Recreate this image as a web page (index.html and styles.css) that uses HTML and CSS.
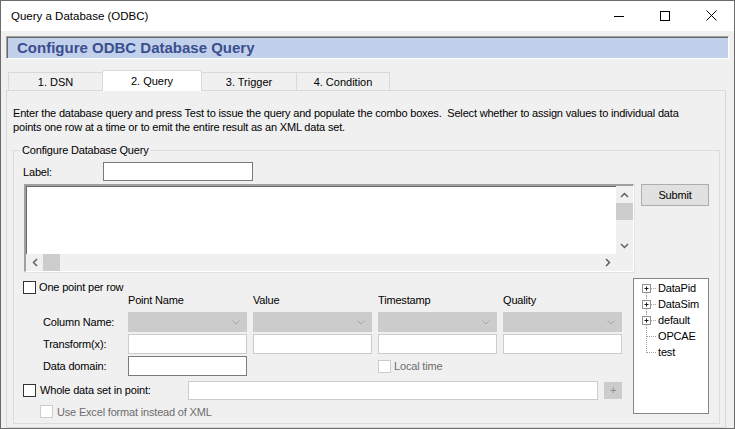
FILE: index.html
```html
<!DOCTYPE html>
<html>

<head>
    <title>Query a Database (ODBC)</title>
    <meta name="viewport" content="width=device-width, initial-scale=1.0">
    <link rel="stylesheet" href="styles.css">
</head>

<body>
    <div class="window">
        <div class="titlebar">
            <span class="title">Query a Database (ODBC)</span>
            <div class="caption-buttons">
                <span class="caption-btn">
                    <svg width="10" height="10" viewBox="0 0 10 10"><line x1="0" y1="5.5" x2="10" y2="5.5" stroke="#000" stroke-width="1"/></svg>
                </span>
                <span class="caption-btn">
                    <svg width="10" height="10" viewBox="0 0 10 10"><rect x="0.5" y="0.5" width="9" height="9" fill="none" stroke="#000" stroke-width="1"/></svg>
                </span>
                <span class="caption-btn">
                    <svg width="11" height="11" viewBox="0 0 11 11"><path d="M0.5 0.5 L10.5 10.5 M10.5 0.5 L0.5 10.5" stroke="#000" stroke-width="1"/></svg>
                </span>
            </div>
        </div>

        <div class="client">
            <div class="banner">Configure ODBC Database Query</div>

            <!-- Wizard steps -->
            <div class="tabs">
                <div class="tab">1. DSN</div>
                <div class="tab selected">2. Query</div>
                <div class="tab">3. Trigger</div>
                <div class="tab">4. Condition</div>
            </div>

            <div class="tab-page">
                <p class="intro">Enter the database query and press Test to issue the query and populate the combo boxes.&nbsp; Select whether to assign values to individual data<br>points one row at a time or to emit the entire result as an XML data set.</p>

                <fieldset class="group">
                    <legend>Configure Database Query</legend>

                    <div class="label-row">
                        <span class="label-text">Label:</span>
                        <div class="textbox label-box"></div>
                    </div>

                    <div class="query-row">
                        <div class="query-box">
                            <div class="query-text"></div>
                            <div class="vscroll">
                                <span class="sb-btn">
                                    <svg width="9" height="6" viewBox="0 0 9 6"><polyline points="1,5 4.5,1.5 8,5" fill="none" stroke="#606060" stroke-width="1.5"/></svg>
                                </span>
                                <span class="sb-thumb"></span>
                                <span class="sb-track"></span>
                                <span class="sb-btn">
                                    <svg width="9" height="6" viewBox="0 0 9 6"><polyline points="1,1 4.5,4.5 8,1" fill="none" stroke="#606060" stroke-width="1.5"/></svg>
                                </span>
                            </div>
                            <div class="hscroll">
                                <span class="sb-btn">
                                    <svg width="6" height="9" viewBox="0 0 6 9"><polyline points="5,1 1.5,4.5 5,8" fill="none" stroke="#606060" stroke-width="1.5"/></svg>
                                </span>
                                <span class="sb-thumb"></span>
                                <span class="sb-track"></span>
                                <span class="sb-btn">
                                    <svg width="6" height="9" viewBox="0 0 6 9"><polyline points="1,1 4.5,4.5 1,8" fill="none" stroke="#606060" stroke-width="1.5"/></svg>
                                </span>
                            </div>
                            <div class="sb-corner"></div>
                        </div>
                        <button type="button" class="submit-btn">Submit</button>
                    </div>

                    <div class="lower">
                        <div class="lower-left">
                            <div class="check-row">
                                <span class="check"></span>
                                <span class="check-label">One point per row</span>
                            </div>

                            <div class="point-grid">
                                <span></span>
                                <span class="col-head">Point Name</span>
                                <span class="col-head">Value</span>
                                <span class="col-head">Timestamp</span>
                                <span class="col-head">Quality</span>

                                <span class="row-label">Column Name:</span>
                                <div class="combo"><svg width="8" height="5" viewBox="0 0 8 5"><polyline points="0.5,0.5 4,4 7.5,0.5" fill="none" stroke="#a6a6a6" stroke-width="1"/></svg></div>
                                <div class="combo"><svg width="8" height="5" viewBox="0 0 8 5"><polyline points="0.5,0.5 4,4 7.5,0.5" fill="none" stroke="#a6a6a6" stroke-width="1"/></svg></div>
                                <div class="combo"><svg width="8" height="5" viewBox="0 0 8 5"><polyline points="0.5,0.5 4,4 7.5,0.5" fill="none" stroke="#a6a6a6" stroke-width="1"/></svg></div>
                                <div class="combo"><svg width="8" height="5" viewBox="0 0 8 5"><polyline points="0.5,0.5 4,4 7.5,0.5" fill="none" stroke="#a6a6a6" stroke-width="1"/></svg></div>

                                <span class="row-label">Transform(x):</span>
                                <div class="textbox light"></div>
                                <div class="textbox light"></div>
                                <div class="textbox light"></div>
                                <div class="textbox light"></div>

                                <span class="row-label">Data domain:</span>
                                <div class="textbox"></div>
                                <span></span>
                                <div class="check-row inline">
                                    <span class="check disabled"></span>
                                    <span class="check-label disabled-text">Local time</span>
                                </div>
                            </div>

                            <div class="whole-row">
                                <span class="check"></span>
                                <span class="whole-label">Whole data set in point:</span>
                                <div class="textbox light whole-box"></div>
                                <span class="plus-btn">+</span>
                            </div>

                            <div class="check-row excel-row">
                                <span class="check disabled"></span>
                                <span class="check-label disabled-text">Use Excel format instead of XML</span>
                            </div>
                        </div>

                        <div class="tree">
                            <div class="tree-node">
                                <svg width="24" height="16" viewBox="0 0 24 16">
                                    <line x1="12.5" y1="13" x2="12.5" y2="16" stroke="#a0a0a0" stroke-dasharray="1 1"/>
                                    <line x1="17" y1="8.5" x2="23" y2="8.5" stroke="#a0a0a0" stroke-dasharray="1 1"/>
                                    <rect x="8.5" y="4.5" width="8" height="8" fill="#fff" stroke="#919191"/>
                                    <path d="M10.5 8.5 H14.5 M12.5 6.5 V10.5" stroke="#1c1c1c"/>
                                </svg>
                                <span>DataPid</span>
                            </div>
                            <div class="tree-node">
                                <svg width="24" height="16" viewBox="0 0 24 16">
                                    <line x1="12.5" y1="0" x2="12.5" y2="4" stroke="#a0a0a0" stroke-dasharray="1 1"/>
                                    <line x1="12.5" y1="13" x2="12.5" y2="16" stroke="#a0a0a0" stroke-dasharray="1 1"/>
                                    <line x1="17" y1="8.5" x2="23" y2="8.5" stroke="#a0a0a0" stroke-dasharray="1 1"/>
                                    <rect x="8.5" y="4.5" width="8" height="8" fill="#fff" stroke="#919191"/>
                                    <path d="M10.5 8.5 H14.5 M12.5 6.5 V10.5" stroke="#1c1c1c"/>
                                </svg>
                                <span>DataSim</span>
                            </div>
                            <div class="tree-node">
                                <svg width="24" height="16" viewBox="0 0 24 16">
                                    <line x1="12.5" y1="0" x2="12.5" y2="4" stroke="#a0a0a0" stroke-dasharray="1 1"/>
                                    <line x1="12.5" y1="13" x2="12.5" y2="16" stroke="#a0a0a0" stroke-dasharray="1 1"/>
                                    <line x1="17" y1="8.5" x2="23" y2="8.5" stroke="#a0a0a0" stroke-dasharray="1 1"/>
                                    <rect x="8.5" y="4.5" width="8" height="8" fill="#fff" stroke="#919191"/>
                                    <path d="M10.5 8.5 H14.5 M12.5 6.5 V10.5" stroke="#1c1c1c"/>
                                </svg>
                                <span>default</span>
                            </div>
                            <div class="tree-node">
                                <svg width="24" height="16" viewBox="0 0 24 16">
                                    <line x1="12.5" y1="0" x2="12.5" y2="16" stroke="#a0a0a0" stroke-dasharray="1 1"/>
                                    <line x1="13" y1="8.5" x2="23" y2="8.5" stroke="#a0a0a0" stroke-dasharray="1 1"/>
                                </svg>
                                <span>OPCAE</span>
                            </div>
                            <div class="tree-node">
                                <svg width="24" height="16" viewBox="0 0 24 16">
                                    <line x1="12.5" y1="0" x2="12.5" y2="9" stroke="#a0a0a0" stroke-dasharray="1 1"/>
                                    <line x1="13" y1="8.5" x2="23" y2="8.5" stroke="#a0a0a0" stroke-dasharray="1 1"/>
                                </svg>
                                <span>test</span>
                            </div>
                        </div>
                    </div>
                </fieldset>
            </div>
        </div>
    </div>
</body>
</html>
```

FILE: styles.css
```css
* {
    box-sizing: border-box;
}

body {
    margin: 0;
    font-family: "Liberation Sans", Arial, sans-serif;
    font-size: 11px;
    color: #000000;
}

.window {
    width: 735px;
    height: 429px;
    border: 1px solid #6b6b6b;
    background-color: #f0f0f0;
    display: flex;
    flex-direction: column;
    overflow: hidden;
}

/* Title bar */
.titlebar {
    height: 30px;
    flex-shrink: 0;
    background-color: #ffffff;
    display: flex;
    align-items: center;
}

.title {
    padding-left: 10px;
    font-size: 11.5px;
    padding-bottom: 1px;
}

.caption-buttons {
    margin-left: auto;
    display: flex;
    height: 100%;
}

.caption-btn {
    width: 46px;
    display: flex;
    align-items: center;
    justify-content: center;
    padding-bottom: 1px;
}

.client {
    flex: 1;
    display: flex;
    flex-direction: column;
    padding-top: 5px;
    min-height: 0;
}

.banner {
    margin: 0 5px;
    height: 23px;
    flex-shrink: 0;
    background-color: #c1d0eb;
    border-top: 1px solid #a0a0a0;
    border-left: 1px solid #a0a0a0;
    border-right: 1px solid #ffffff;
    border-bottom: 1px solid #ffffff;
    box-shadow: inset 1px 1px 0 #696969;
    padding-left: 10px;
    font-size: 15px;
    font-weight: bold;
    color: #3b4e8e;
    line-height: 21px;
}

/* Tabs */
.tabs {
    margin: 11px 0 0 5px;
    padding-left: 2px;
    height: 20px;
    flex-shrink: 0;
    display: flex;
    align-items: flex-end;
}

.tab {
    height: 18px;
    border: 1px solid #d9d9d9;
    border-bottom: none;
    background-color: #f0f0f0;
    display: flex;
    align-items: center;
    justify-content: center;
    margin-left: -1px;
}

.tab:nth-child(1) {
    width: 95px;
    margin-left: 0;
}

.tab:nth-child(2) {
    width: 100px;
}

.tab:nth-child(3) {
    width: 96px;
}

.tab:nth-child(4) {
    width: 94px;
}

.tab.selected {
    height: 21px;
    margin-bottom: -1px;
    background-color: #ffffff;
    position: relative;
    z-index: 1;
    padding-bottom: 1px;
}

.tab-page {
    margin-left: 5px;
    width: 720px;
    flex: 1;
    border: 1px solid #d9d9d9;
    padding: 15px 0 0 6px;
    letter-spacing: -0.18px;
}

.intro {
    margin: 0;
    line-height: 14px;
    white-space: nowrap;
}

/* Group box */
.group {
    margin: 10px 0 0 0;
    width: 707px;
    border: 1px solid #dcdcdc;
    padding: 5px 0 5px 9px;
}

.group legend {
    margin-left: -3px;
    padding: 0 2px;
    line-height: 13px;
}

.label-row {
    display: flex;
    align-items: center;
    height: 19px;
}

.label-text {
    width: 80px;
}

.textbox {
    background-color: #ffffff;
    border: 1px solid #7a7a7a;
    height: 20px;
}

.textbox.light {
    border-color: #cccccc;
}

.label-box {
    width: 150px;
    height: 19px;
}

.query-row {
    display: flex;
    align-items: flex-start;
    margin-top: 3px;
}

.query-box {
    margin-left: 1px;
    width: 610px;
    height: 88px;
    border-top: 2px solid #a0a0a0;
    border-left: 2px solid #a0a0a0;
    border-right: 1px solid #ffffff;
    border-bottom: 1px solid #ffffff;
    box-shadow: inset 1px 1px 0 #696969, 1px 1px 0 #e3e3e3;
    display: grid;
    grid-template-columns: 1fr 17px;
    grid-template-rows: 1fr 17px;
    background-color: #ffffff;
}

.vscroll {
    display: grid;
    grid-template-rows: 17px 17px 1fr 17px;
    background-color: #f0f0f0;
}

.hscroll {
    display: grid;
    grid-template-columns: 17px 17px 1fr 17px;
    background-color: #f0f0f0;
}

.sb-btn {
    display: flex;
    align-items: center;
    justify-content: center;
}

.sb-thumb {
    background-color: #cdcdcd;
}

.sb-corner {
    background-color: #f0f0f0;
}

.submit-btn {
    margin-left: 7px;
    width: 68px;
    height: 22px;
    background-color: #e1e1e1;
    border: 1px solid #adadad;
    font-family: "Liberation Sans", Arial, sans-serif;
    font-size: 11px;
    letter-spacing: -0.18px;
    color: #000000;
    padding: 0;
}

/* Point mapping */
.lower {
    display: flex;
    align-items: flex-start;
    margin-top: 6px;
}

.lower-left {
    width: 600px;
    padding-top: 2px;
}

.check-row {
    display: flex;
    align-items: center;
    height: 14px;
}

.check-row.inline {
    height: 20px;
}

.check {
    width: 13px;
    height: 13px;
    border: 1px solid #333333;
    background-color: #ffffff;
    flex-shrink: 0;
}

.check.disabled {
    border-color: #cccccc;
}

.check-label {
    margin-left: 3px;
}

.disabled-text {
    color: #6d6d6d;
}

.point-grid {
    display: grid;
    grid-template-columns: 79px repeat(4, 119px);
    grid-template-rows: 16px 20px 20px 20px;
    column-gap: 6px;
    row-gap: 2px;
    margin-left: 20px;
}

.col-head {
    line-height: 13px;
}

.row-label {
    align-self: center;
}

.combo {
    background-color: #cccccc;
    border: 1px solid #cccccc;
    display: flex;
    align-items: center;
    justify-content: flex-end;
    padding-right: 6px;
}

.whole-row {
    display: flex;
    align-items: center;
    height: 20px;
    margin-top: 4px;
}

.whole-label {
    margin-left: 4px;
    width: 148px;
}

.whole-box {
    width: 410px;
    height: 19px;
}

.plus-btn {
    margin-left: 6px;
    width: 18px;
    height: 17px;
    background-color: #cccccc;
    color: #8d8d8d;
    display: flex;
    align-items: center;
    justify-content: center;
    font-size: 11px;
}

.excel-row {
    margin-top: 5px;
    margin-left: 17px;
    height: 13px;
}

.excel-row .check-label {
    margin-left: 4px;
}

/* Tree view */
.tree {
    margin-left: 10px;
    width: 76px;
    height: 136px;
    border: 1px solid #828790;
    background-color: #ffffff;
    padding-top: 1px;
}

.tree-node {
    display: flex;
    align-items: center;
    height: 16px;
}

.tree-node svg {
    flex-shrink: 0;
}
```
